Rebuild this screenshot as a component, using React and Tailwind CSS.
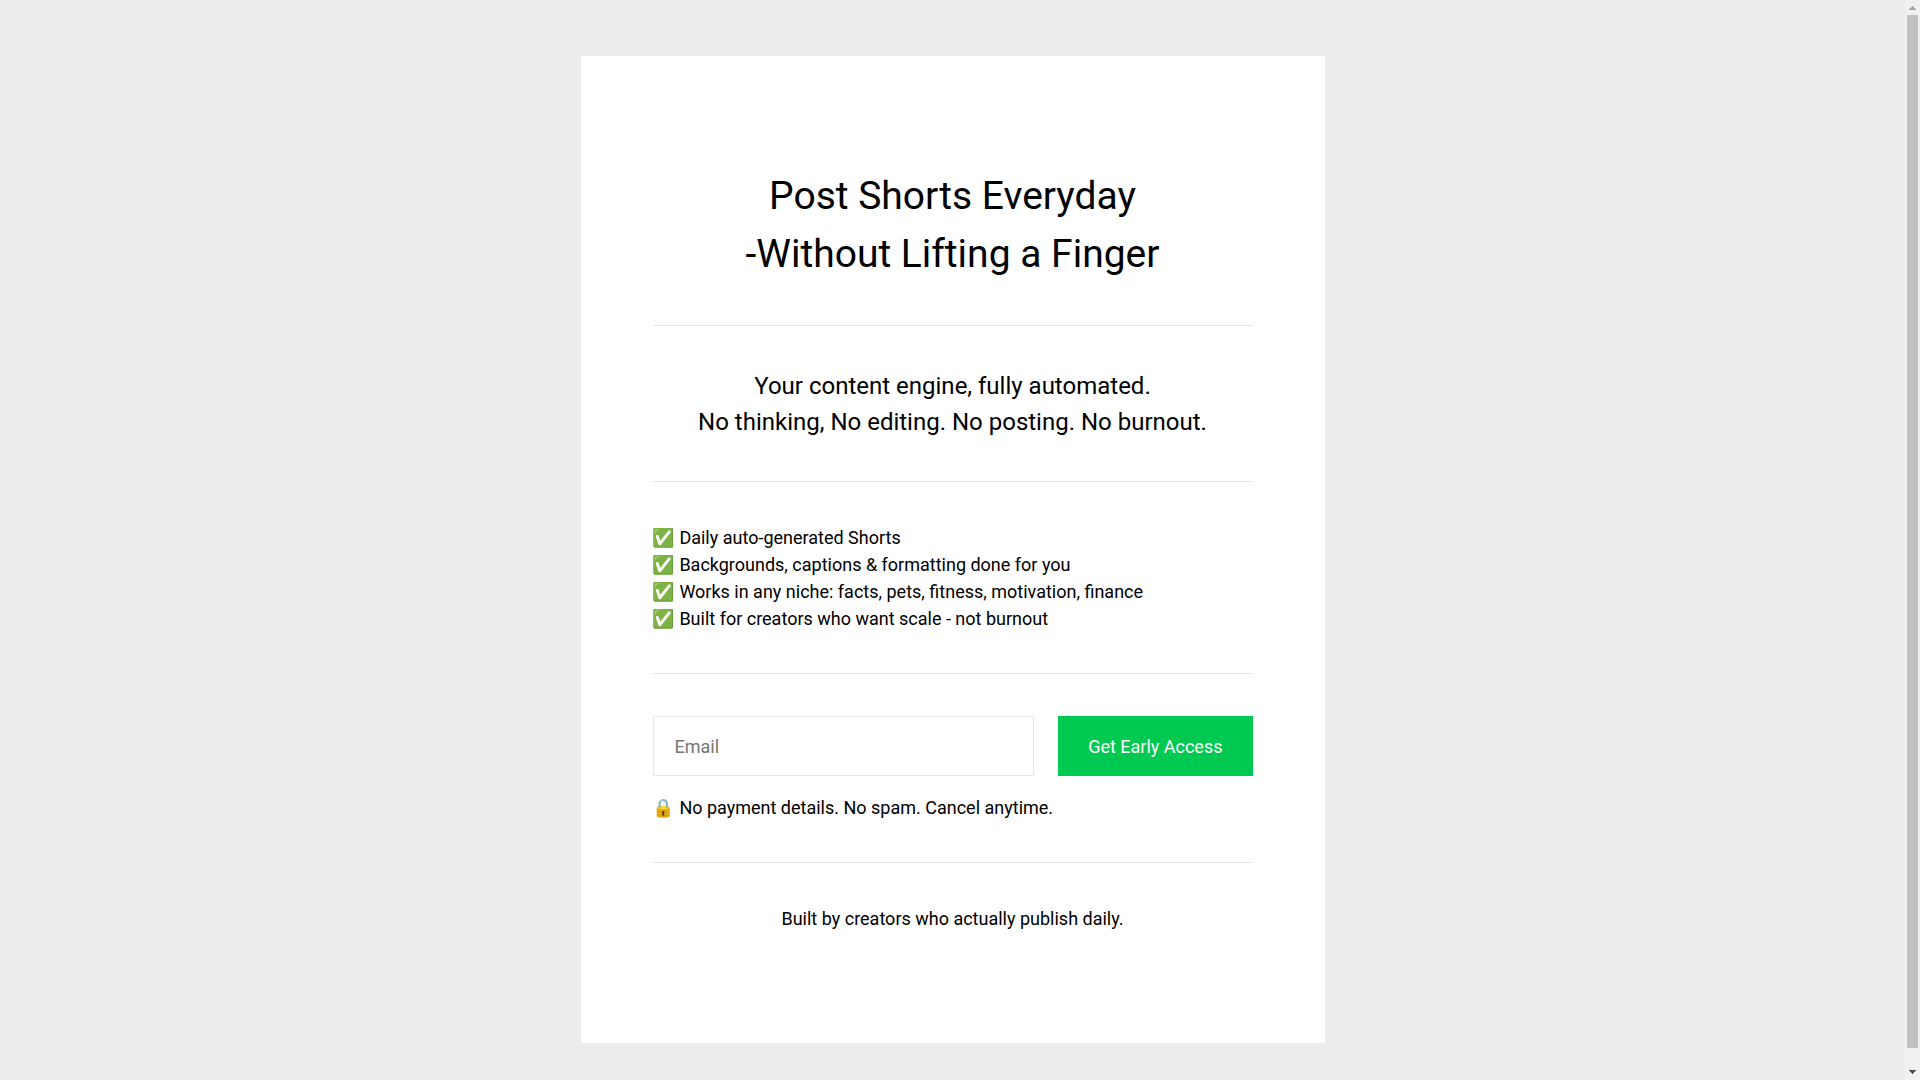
import React, { useState } from "react";

const features = [
  "Daily auto-generated Shorts",
  "Backgrounds, captions & formatting done for you",
  "Works in any niche: facts, pets, fitness, motivation, finance",
  "Built for creators who want scale - not burnout",
];

const Divider = () => <hr className="mt-[41px] mb-[42px] border-t border-[#e5e5e5]" />;

const SignupForm = () => {
  const [email, setEmail] = useState("");

  return (
    <form onSubmit={(e) => e.preventDefault()}>
      <div className="flex flex-col sm:flex-row gap-6">
        <input
          type="email"
          aria-label="Email"
          placeholder="Email"
          value={email}
          onChange={(e) => setEmail(e.target.value)}
          className="flex-1 min-w-0 h-[60px] px-[21px] border border-gray-200 bg-white placeholder:text-[#757575] focus:outline-none focus:border-gray-400"
        />
        <button
          type="submit"
          className="h-[60px] px-[30px] bg-[#00c951] text-white hover:bg-green-600 transition-colors"
        >
          Get Early Access
        </button>
      </div>
      <p className="mt-[18px]">🔒 No payment details. No spam. Cancel anytime.</p>
    </form>
  );
};

const ScrollBar = () => (
  <div aria-hidden="true" className="w-[15px] shrink-0 flex flex-col items-center bg-[#f1f1f1]">
    <svg className="w-[15px] h-[15px] shrink-0" viewBox="0 0 15 15" shapeRendering="crispEdges">
      <path d="M7 6h1v1h1v1h1v1h1v1H4V9h1V8h1V7h1z" fill="#a3a3a3" />
    </svg>
    <div className="flex-1 w-full flex flex-col items-center">
      <div className="w-[11px] h-[98.4%] bg-[#c1c1c1]" />
    </div>
    <svg className="w-[15px] h-[15px] shrink-0" viewBox="0 0 15 15" shapeRendering="crispEdges">
      <path d="M4 5h7v1h-1v1H9v1H8v1H7V8H6V7H5V6H4z" fill="#505050" />
    </svg>
  </div>
);

const App = () => {
  return (
    <div className="h-screen flex bg-[#ededed] text-[18px] leading-[27px] text-black font-[Roboto,'Noto_Color_Emoji',sans-serif]">
      <div className="flex-1 min-w-0 overflow-y-auto py-14 [scrollbar-width:none]">
        <main className="mx-auto w-full max-w-[744px] bg-white px-[72px] py-[111px]">
          <h1 className="text-center text-[39px] leading-[58px] pb-px">
            Post Shorts Everyday
            <br />
            -Without Lifting a Finger
          </h1>
          <Divider />
          <h2 className="text-center text-2xl leading-9">
            Your content engine, fully automated.
            <br />
            No thinking, No editing. No posting. No burnout.
          </h2>
          <Divider />
          <ul>
            {features.map((feature) => (
              <li key={feature}>✅ {feature}</li>
            ))}
          </ul>
          <Divider />
          <SignupForm />
          <Divider />
          <p className="text-center">Built by creators who actually publish daily.</p>
        </main>
      </div>
      <ScrollBar />
    </div>
  );
};

export default App;
